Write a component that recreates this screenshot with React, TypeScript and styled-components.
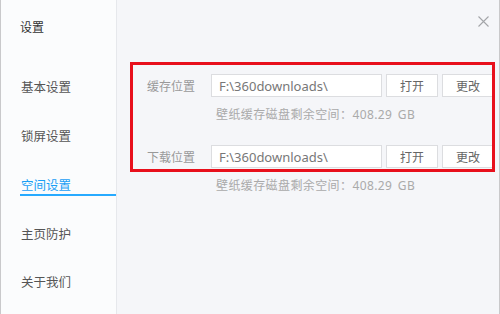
import React from "react";
import styled, { createGlobalStyle } from "styled-components";

const GlobalStyle = createGlobalStyle`
  html, body { margin: 0; padding: 0; background: #ffffff; }
  * { box-sizing: border-box; }
  body { font-family: "Noto Sans", "Noto Sans CJK SC", sans-serif; }
`;

const Window = styled.div`
  width: 500px;
  height: 314px;
  display: flex;
  border-left: 1px solid #c9c9cb;
  border-right: 1px solid #c9c9cb;
  overflow: hidden;
  font-family: "Noto Sans", "Noto Sans CJK SC", sans-serif;
`;

const Sidebar = styled.nav`
  width: 116px;
  flex: none;
  background: #fbfcfd;
  border-right: 1px solid #e6e8ec;
  display: flex;
  flex-direction: column;
`;

const SideTitle = styled.div`
  height: 72px;
  padding-left: 19px;
  padding-top: 18px;
  font-size: 12px;
  line-height: 18px;
  color: #333333;
  font-family: "Noto Sans CJK SC", sans-serif;
`;

const NavItem = styled.div<{ $active?: boolean }>`
  height: 50px;
  margin-left: 19px;
  padding-left: 1px;
  padding-top: 8px;
  font-size: 12.5px;
  line-height: 18px;
  font-family: "Noto Sans CJK SC", sans-serif;
  color: ${(p) => (p.$active ? "#1a9ff5" : "#555555")};
  position: relative;
  &::after {
    content: "";
    display: ${(p) => (p.$active ? "block" : "none")};
    position: absolute;
    left: 0;
    right: 0;
    top: 26px;
    height: 2px;
    background: #27aaff;
  }
`;

const Main = styled.main`
  flex: 1;
  background: #f5f6f9;
  position: relative;
  display: flex;
  flex-direction: column;
`;

const Header = styled.div`
  height: 42px;
  display: flex;
  justify-content: flex-end;
  align-items: center;
  padding-right: 10px;
`;

const CloseIcon = styled.svg`
  width: 11px;
  height: 11px;
  display: block;
`;

const Content = styled.div`
  padding: 32px 0 0 30px;
  display: flex;
  flex-direction: column;
  gap: 22px;
`;

const Section = styled.div`
  display: flex;
  flex-direction: column;
`;

const Row = styled.div`
  display: flex;
  align-items: center;
  height: 23px;
`;

const Label = styled.span`
  width: 64px;
  flex: none;
  font-size: 12px;
  font-family: "Noto Sans CJK SC", sans-serif;
  color: #999999;
`;

const PathBox = styled.div`
  width: 171px;
  height: 23px;
  flex: none;
  background: #ffffff;
  border: 1px solid #dcdde0;
  padding-left: 7px;
  display: flex;
  align-items: center;
  font-size: 13px;
  color: #777777;
  font-family: "Noto Sans", "Noto Sans CJK SC", sans-serif;
`;

const Button = styled.button`
  width: 52px;
  height: 23px;
  flex: none;
  margin-left: 4px;
  background: #ffffff;
  border: 1px solid #dcdde0;
  padding: 0;
  font-size: 12px;
  font-family: "Noto Sans CJK SC", sans-serif;
  color: #666666;
`;

const Note = styled.div`
  margin-top: 10px;
  padding-left: 69px;
  font-size: 12px;
  line-height: 16px;
  letter-spacing: 0.4px;
  word-spacing: 2px;
  color: #aaaaaa;
  font-family: "Noto Sans", "Noto Sans CJK SC", sans-serif;
`;

const Highlight = styled.div`
  position: absolute;
  left: 13px;
  top: 62px;
  width: 365px;
  height: 110px;
  border: 3px solid #e8101c;
  pointer-events: none;
`;

const navItems = ["基本设置", "锁屏设置", "空间设置", "主页防护", "关于我们"];

const rows = [
  { label: "缓存位置", path: "F:\\360downloads\\" },
  { label: "下载位置", path: "F:\\360downloads\\" },
];

export default function App() {
  return (
    <>
      <GlobalStyle />
      <Window>
        <Sidebar>
          <SideTitle>设置</SideTitle>
          {navItems.map((n) => (
            <NavItem key={n} $active={n === "空间设置"}>
              {n}
            </NavItem>
          ))}
        </Sidebar>
        <Main>
          <Header>
            <CloseIcon viewBox="0 0 11 11">
              <path d="M0.5 0.5 L10.5 10.5 M10.5 0.5 L0.5 10.5" stroke="#a3a5a9" strokeWidth="1.1" fill="none" />
            </CloseIcon>
          </Header>
          <Content>
            {rows.map((r) => (
              <Section key={r.label}>
                <Row>
                  <Label>{r.label}</Label>
                  <PathBox>{r.path}</PathBox>
                  <Button>打开</Button>
                  <Button>更改</Button>
                </Row>
                <Note>壁纸缓存磁盘剩余空间：408.29 GB</Note>
              </Section>
            ))}
          </Content>
          <Highlight />
        </Main>
      </Window>
    </>
  );
}
